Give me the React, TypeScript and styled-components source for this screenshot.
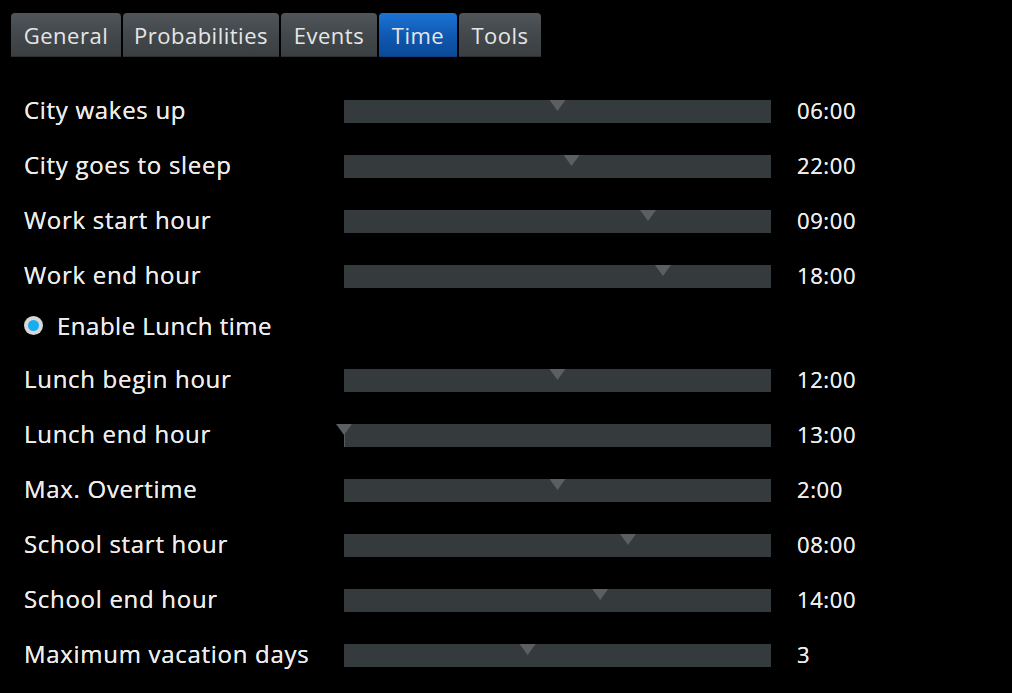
import styled, { createGlobalStyle } from "styled-components"

const GlobalStyle = createGlobalStyle`
  html, body {
    margin: 0;
    padding: 0;
    background: #000;
  }
  body {
    font-family: "Open Sans", "Noto Sans", "DejaVu Sans", sans-serif;
    color: #ececec;
  }
`

type Tab = { name: string; width: number; active?: boolean }

const tabs: Tab[] = [
  { name: "General", width: 110 },
  { name: "Probabilities", width: 156 },
  { name: "Events", width: 96 },
  { name: "Time", width: 78, active: true },
  { name: "Tools", width: 82 },
]

type Setting = { label: string; value: string; pos: number }

const before: Setting[] = [
  { label: "City wakes up", value: "06:00", pos: 0.5 },
  { label: "City goes to sleep", value: "22:00", pos: 0.533 },
  { label: "Work start hour", value: "09:00", pos: 0.712 },
  { label: "Work end hour", value: "18:00", pos: 0.747 },
]

const after: Setting[] = [
  { label: "Lunch begin hour", value: "12:00", pos: 0.5 },
  { label: "Lunch end hour", value: "13:00", pos: 0 },
  { label: "Max. Overtime", value: "2:00", pos: 0.5 },
  { label: "School start hour", value: "08:00", pos: 0.665 },
  { label: "School end hour", value: "14:00", pos: 0.6 },
  { label: "Maximum vacation days", value: "3", pos: 0.43 },
]

const Page = styled.div`
  width: 1012px;
  height: 693px;
  background: #000;
  padding: 13px 0 0 11px;
  box-sizing: border-box;
  overflow: hidden;
`

const TabBar = styled.div`
  display: flex;
  gap: 2px;
  height: 44px;
`

const TabButton = styled.div<{ $active?: boolean; $width: number }>`
  width: ${p => p.$width}px;
  height: 44px;
  box-sizing: border-box;
  display: flex;
  align-items: center;
  justify-content: center;
  padding-top: 1px;
  font-size: 22px;
  letter-spacing: 0.5px;
  color: #e6e6e6;
  border-radius: 4px 4px 0 0;
  background: ${p =>
    p.$active
      ? "linear-gradient(#1c74d6, #0f57b0 55%, #0c4a98)"
      : "linear-gradient(#50555a, #43484c 50%, #3b3f42)"};
  border-bottom: 1px solid ${p => (p.$active ? "#0b3f80" : "#2e3134")};
`

const List = styled.div`
  display: flex;
  flex-direction: column;
  padding: 27px 0 0 13px;
`

const Row = styled.div`
  display: flex;
  align-items: center;
  height: 55px;
`

const Label = styled.div`
  width: 320px;
  font-size: 24px;
  letter-spacing: 0.7px;
  line-height: 1;
  margin-top: -3px;
  text-shadow: 0 0 0.4px #ececec;
`

const Track = styled.div`
  position: relative;
  width: 427px;
  height: 23px;
  background: #353a3d;
`

const Handle = styled.div`
  position: absolute;
  top: 0;
  width: 16px;
  height: 11px;
  margin-left: -8px;
  background: #5b5f62;
  clip-path: polygon(0 0, 100% 0, 50% 100%);
`

const Stem = styled.div`
  position: absolute;
  top: 10px;
  width: 1px;
  height: 13px;
  background: #55595c;
`

const Value = styled.div`
  margin-left: 26px;
  font-size: 22px;
  letter-spacing: 0.6px;
  line-height: 1;
  margin-top: -3px;
  text-shadow: 0 0 0.4px #ececec;
`

const CheckRow = styled.div`
  display: flex;
  align-items: center;
  gap: 14px;
  height: 54px;
  margin-top: -5px;
  padding-bottom: 1px;
  box-sizing: border-box;
  font-size: 24px;
  letter-spacing: 0.5px;
  text-shadow: 0 0 0.4px #ececec;
`

const Radio = styled.div`
  width: 19px;
  height: 19px;
  box-sizing: border-box;
  border-radius: 50%;
  background: #d8d8d8;
  display: flex;
  align-items: center;
  justify-content: center;
  &::after {
    content: "";
    width: 11px;
    height: 11px;
    border-radius: 50%;
    background: #16aef2;
  }
`

function SliderRow({ s }: { s: Setting }) {
  return (
    <Row>
      <Label>{s.label}</Label>
      <Track>
        <Handle style={{ left: `${s.pos * 100}%` }} />
        {s.pos === 0 && <Stem style={{ left: 0 }} />}
      </Track>
      <Value>{s.value}</Value>
    </Row>
  )
}

export default function App() {
  return (
    <Page>
      <GlobalStyle />
      <TabBar>
        {tabs.map(t => (
          <TabButton key={t.name} $active={t.active} $width={t.width}>
            {t.name}
          </TabButton>
        ))}
      </TabBar>
      <List>
        {before.map(s => (
          <SliderRow key={s.label} s={s} />
        ))}
        <CheckRow>
          <Radio />
          Enable Lunch time
        </CheckRow>
        {after.map(s => (
          <SliderRow key={s.label} s={s} />
        ))}
      </List>
    </Page>
  )
}
